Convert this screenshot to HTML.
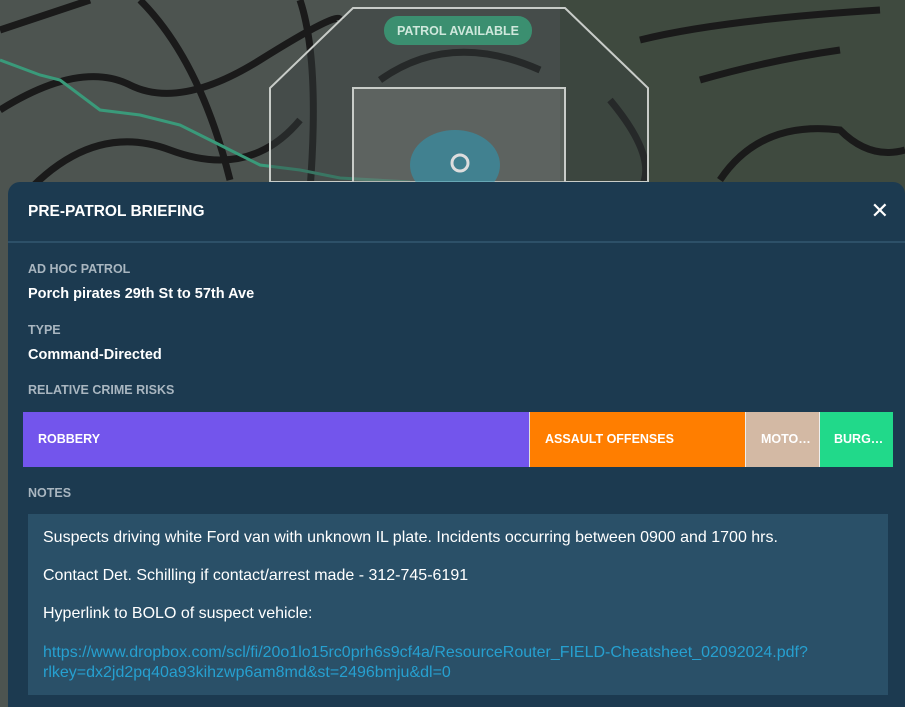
<!DOCTYPE html>
<html><head><meta charset="utf-8"><style>
html,body{margin:0;padding:0;width:905px;height:707px;overflow:hidden;font-family:"Liberation Sans",sans-serif;background:#4d5450;}
.map{position:absolute;left:0;top:0;width:905px;height:707px;}
.panel{position:absolute;left:8px;top:182px;width:897px;height:525px;background:#1c3a50;border-radius:12px 12px 0 0;overflow:hidden;}
.hdr{position:absolute;left:20px;top:21px;color:#fff;font-weight:bold;font-size:15.5px;}
.x{position:absolute;right:16px;top:16px;color:#fff;font-size:22px;}
.sep{position:absolute;left:0;right:0;top:59px;height:2px;background:#2d5068;}
.lbl{position:absolute;left:20px;color:#a9b6c0;font-weight:bold;font-size:12.5px;}
.val{position:absolute;left:20px;color:#fff;font-weight:bold;font-size:14.5px;}
.bar{position:absolute;left:15px;top:230px;width:870px;height:55px;display:flex;}
.bar div{height:100%;color:#fff;font-weight:bold;font-size:12.5px;line-height:55px;padding-left:15px;box-sizing:border-box;overflow:hidden;white-space:nowrap;}
.notes{position:absolute;left:20px;top:332px;width:860px;height:181px;background:#2a5068;color:#fff;font-size:16px;}
.notes p{margin:0;position:absolute;left:15px;}
a{color:#26a0d0;text-decoration:none;}
</style></head><body>
<div class="map">
<svg width="905" height="707" style="position:absolute;left:0;top:0">
<rect width="905" height="707" fill="#4d5450"/>
<rect x="560" y="0" width="345" height="200" fill="#3f4a3f"/>
<g stroke="#1a1a1a" stroke-width="7" fill="none">
<path d="M0 110 Q80 60 130 85 T260 60 T340 20"/>
<path d="M0 30 Q60 10 90 0"/>
<path d="M20 200 Q90 120 170 150 T300 120"/>
<path d="M140 0 Q200 60 230 180"/>
<path d="M300 0 Q320 60 310 190"/>
<path d="M640 40 Q720 20 880 10"/>
<path d="M700 80 Q770 60 840 50"/>
<path d="M720 180 Q760 120 840 130 Q870 160 905 150"/>
<path d="M610 100 Q660 160 640 190"/>
<path d="M380 80 Q450 30 540 70"/>
</g>
<path d="M0 60 L40 75 L60 80 L100 110 L140 115 L180 125 L230 150 L260 165 L300 170 L340 178 L410 182" stroke="#3a9a7a" stroke-width="3" fill="none"/>
<polygon points="353,8 565,8 648,88 648,182 270,182 270,88" fill="#3a4240" fill-opacity=".4" stroke="#c8ccc8" stroke-width="2"/>
<rect x="353" y="88" width="212" height="100" fill="#8a8e8a" fill-opacity=".35" stroke="#c8ccc8" stroke-width="2"/>
<ellipse cx="455" cy="165" rx="45" ry="35" fill="#2a9ab8" fill-opacity=".55"/>
<circle cx="460" cy="163" r="8" fill="none" stroke="#ddd" stroke-width="3"/>
<rect x="384" y="16" width="148" height="29" rx="14" fill="#3b8f70"/>
<text x="458" y="35" text-anchor="middle" fill="#cfe8dc" font-family="Liberation Sans" font-weight="bold" font-size="12.5">PATROL AVAILABLE</text>
</svg>
</div>
<div class="panel">
<div class="hdr">PRE-PATROL BRIEFING</div>
<div class="x">✕</div>
<div class="sep"></div>
<div class="lbl" style="top:80px">AD HOC PATROL</div>
<div class="val" style="top:104px">Porch pirates 29th St to 57th Ave</div>
<div class="lbl" style="top:141px">TYPE</div>
<div class="val" style="top:165px">Command-Directed</div>
<div class="lbl" style="top:201px">RELATIVE CRIME RISKS</div>
<div class="bar">
<div style="width:507px;background:#7355ec;border-right:1px solid #ddd">ROBBERY</div>
<div style="width:215px;background:#ff7e00">ASSAULT OFFENSES</div>
<div style="width:75px;background:#d3b9a4;border-left:1px solid #eee;border-right:1px solid #eee">MOTO…</div>
<div style="width:73px;background:#21d98a;padding-left:14px">BURG…</div>
</div>
<div class="lbl" style="top:304px">NOTES</div>
<div class="notes">
<p style="top:15px">Suspects driving white Ford van with unknown IL plate. Incidents occurring between 0900 and 1700 hrs.</p>
<p style="top:53px">Contact Det. Schilling if contact/arrest made - 312-745-6191</p>
<p style="top:91px">Hyperlink to BOLO of suspect vehicle:</p>
<p style="top:129px;line-height:20px"><a>https://www.dropbox.com/scl/fi/20o1lo15rc0prh6s9cf4a/ResourceRouter_FIELD-Cheatsheet_02092024.pdf?<br>rlkey=dx2jd2pq40a93kihzwp6am8md&amp;st=2496bmju&amp;dl=0</a></p>
</div>
</div>
</body></html>
